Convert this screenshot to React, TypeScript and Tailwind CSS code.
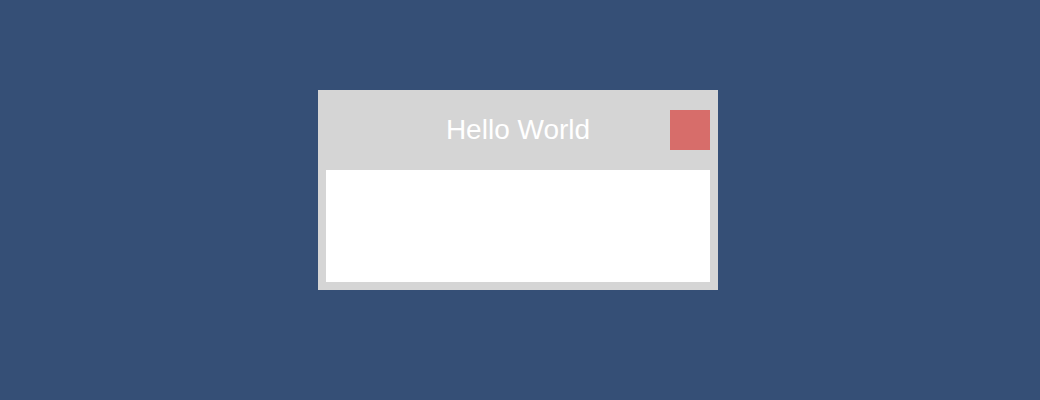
export default function App() {
  return (
    <div className="w-[1040px] h-[400px] bg-[#354f76] pt-[90px] pl-[318px]">
      <div className="w-[400px] h-[200px] bg-[#d5d5d5] px-2 pb-2 flex flex-col">
        <div className="grid grid-cols-[40px_1fr_40px] items-center pt-5 pb-5">
          <div />
          <h1 className="text-center text-[28px] leading-[40px] text-white font-['Liberation_Sans',Arial,sans-serif]">
            Hello World
          </h1>
          <button className="w-10 h-10 bg-[#d76d6a]" aria-label="Close" />
        </div>
        <div className="flex-1 bg-white" />
      </div>
    </div>
  );
}
